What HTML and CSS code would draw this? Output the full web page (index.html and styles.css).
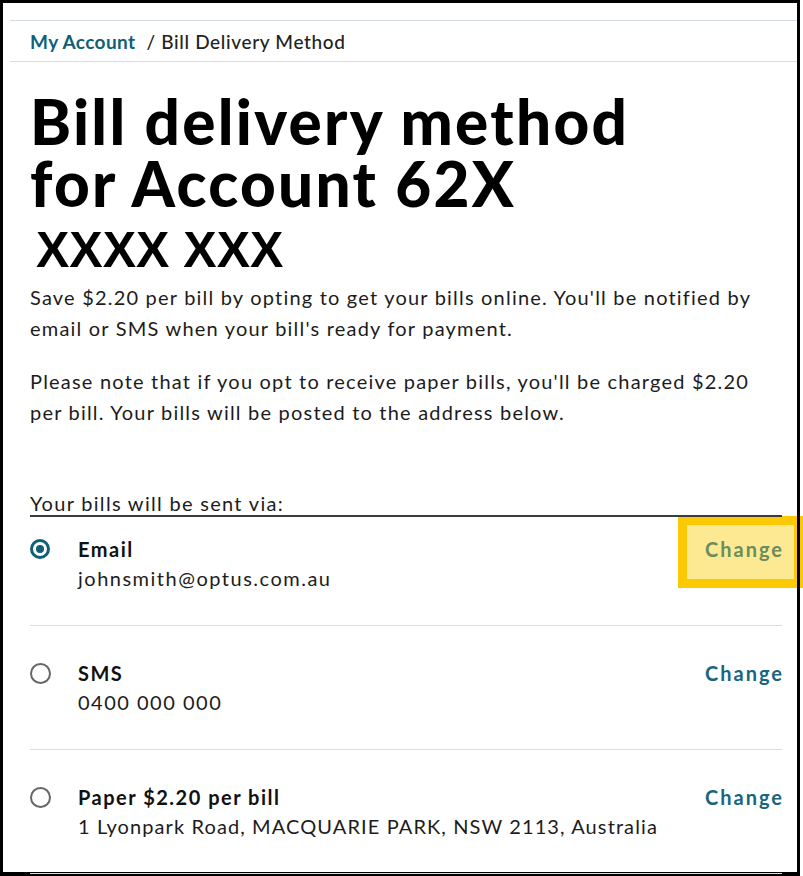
FILE: index.html
```html
<!DOCTYPE html>
<html>
<head>
  <meta charset="UTF-8">
  <link rel="stylesheet" href="styles.css">
</head>
<body>
  <div class="frame">
    <nav class="breadcrumb">
      <a href="#" class="crumb-link">My Account</a>
      <span class="crumb-current">/ Bill Delivery Method</span>
    </nav>

    <main class="content">
      <h1 class="page-title">Bill delivery method for&nbsp;Account 62X
        <span class="account-rest">XXXX XXX</span>
      </h1>
      <p class="intro">Save $2.20 per bill by opting to get your bills online. You'll be notified by email or SMS when your bill's ready for payment.</p>
      <p class="intro">Please note that if you opt to receive paper bills, you'll be charged $2.20 per bill. Your bills will be posted to the address below.</p>

      <div class="delivery">
        <div class="legend">Your bills will be sent via:</div>

        <div class="option option-first">
          <span class="radio radio-checked"></span>
          <div class="option-text">
            <div class="option-label">Email</div>
            <div class="option-value">johnsmith@optus.com.au</div>
          </div>
          <a href="#" class="change-link highlighted">Change</a>
        </div>

        <div class="option">
          <span class="radio"></span>
          <div class="option-text">
            <div class="option-label">SMS</div>
            <div class="option-value">0400 000 000</div>
          </div>
          <a href="#" class="change-link">Change</a>
        </div>

        <div class="option">
          <span class="radio"></span>
          <div class="option-text">
            <div class="option-label">Paper $2.20 per bill</div>
            <div class="option-value address">1 Lyonpark Road, MACQUARIE PARK, NSW 2113, Australia</div>
          </div>
          <a href="#" class="change-link">Change</a>
        </div>
      </div>
    </main>
  </div>
</body>
</html>
```

FILE: styles.css
```css
body {
  margin: 0;
  background: #fff;
  font-family: Lato, "Noto Sans", sans-serif;
  color: #1c1c1c;
}
.frame {
  width: 800px;
  height: 876px;
  box-sizing: border-box;
  border: 3px solid #000;
  border-bottom-width: 4px;
  overflow: visible;
}
.breadcrumb {
  margin: 17px 0 0 7px;
  height: 40px;
  border-top: 1px solid #d6dde2;
  border-bottom: 1px solid #d6dde2;
  padding-left: 20px;
  display: flex;
  align-items: center;
  gap: 11px;
  font-size: 19px;
}
.crumb-link {
  color: #0f5f78;
  font-weight: 700;
  letter-spacing: 0.4px;
  text-decoration: none;
}
.crumb-current {
  color: #222;
  font-weight: 500;
  letter-spacing: 0.65px;
}
.content {
  padding: 0 15px 0 27px;
}
.page-title {
  margin: 28px 0 0;
  font-size: 62px;
  line-height: 62px;
  font-weight: 900;
  letter-spacing: 2.3px;
  color: #000;
  width: 660px;
}
.account-rest {
  display: block;
  margin-top: 8px;
  padding-left: 6px;
  font-family: "Liberation Sans", Arial, sans-serif;
  font-size: 50px;
  line-height: 56px;
  font-weight: 700;
  letter-spacing: 0;
}
.intro {
  margin: 4px 0 22px;
  font-size: 20px;
  line-height: 31px;
  letter-spacing: 1.2px;
}
.delivery {
  margin-top: 63px;
}
.legend {
  font-size: 20px;
  line-height: 24px;
  letter-spacing: 1.3px;
  border-bottom: 2px solid #3c3c3c;
}
.option {
  display: grid;
  grid-template-columns: 48px 1fr auto;
  padding: 34px 0 31px;
  border-bottom: 1px solid #d8dee2;
}
.option-first {
  padding-top: 19px;
}
.radio {
  margin-top: 3px;
  width: 21px;
  height: 21px;
  box-sizing: border-box;
  border: 2px solid #666;
  border-radius: 50%;
}
.radio-checked {
  width: 20px;
  height: 20px;
  border: 3px solid #0f5f78;
  display: flex;
  align-items: center;
  justify-content: center;
}
.radio-checked::after {
  content: '';
  width: 8px;
  height: 8px;
  border-radius: 50%;
  background: #0f5f78;
}
.option-label {
  font-size: 20px;
  line-height: 26px;
  font-weight: 700;
  letter-spacing: 1.5px;
  color: #111;
}
.option-value {
  font-size: 20px;
  line-height: 32px;
  letter-spacing: 1.5px;
}
.address {
  letter-spacing: 1.1px;
}
.change-link {
  align-self: start;
  font-size: 20px;
  line-height: 26px;
  font-weight: 700;
  letter-spacing: 2px;
  margin-right: -2px;
  color: #17657e;
  text-decoration: none;
  position: relative;
}
.highlighted {
  color: #6b8c5c;
}
.highlighted::before {
  content: '';
  position: absolute;
  top: -20px;
  bottom: -26px;
  left: -27px;
  right: -19px;
  border: 9px solid #fcca04;
  background: #fde992;
  z-index: -1;
}
```
